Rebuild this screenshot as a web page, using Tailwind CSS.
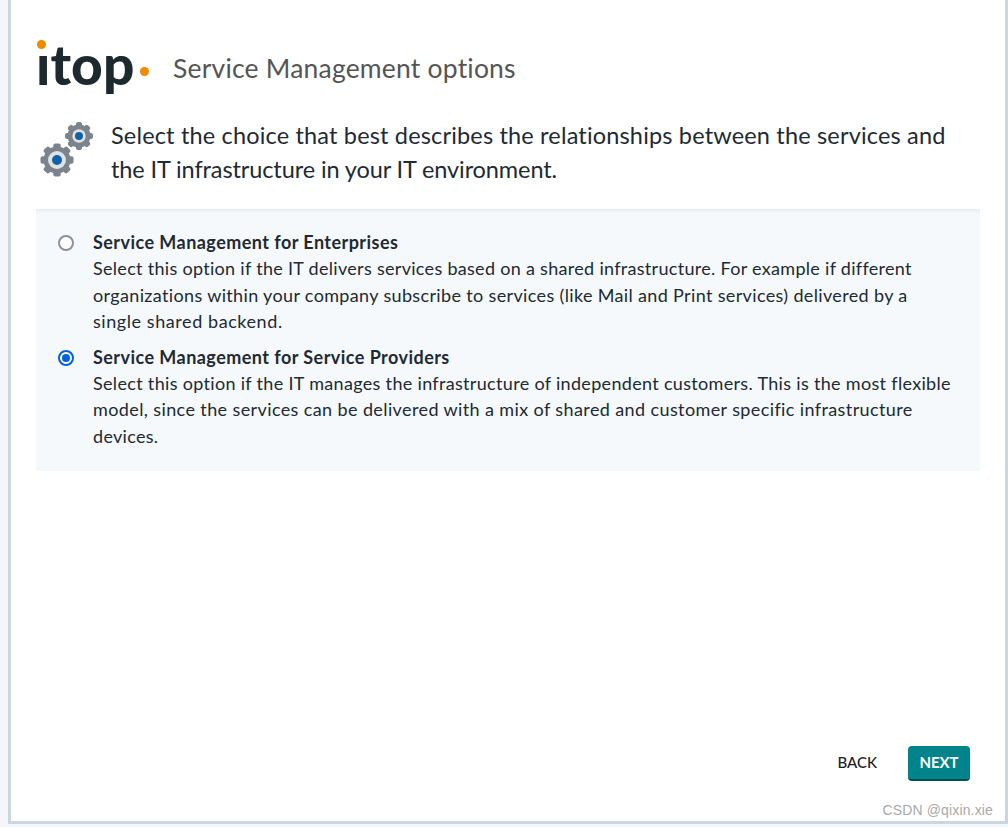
<!DOCTYPE html>
<html lang="en">
<head>
  <meta charset="UTF-8">
  <title>iTop setup</title>
  <script src="https://cdn.jsdelivr.net/npm/@tailwindcss/browser@4"></script>
</head>
<body class="h-[827px] w-[1008px] overflow-hidden bg-[#f4f7fa] font-['Lato','Liberation_Sans',sans-serif] text-[#212934]">
  <div class="relative ml-[8px] flex h-[824px] w-[1000px] flex-col border-b-[3px] border-l-[3px] border-r-[3px] border-[#ccd6e1] bg-white pl-[25px] pr-[25px]">
    <!-- header -->
    <div class="flex h-[108px] items-start">
      <div class="relative mt-[32px] h-[64px] w-[114px] shrink-0">
        <span class="block text-[55px] leading-[64px] font-black tracking-[0.1px] text-[#1c2a30]">ıtop</span>
        <span class="absolute left-[1px] top-[8px] h-[9px] w-[9px] rounded-full bg-[#f08a00]"></span>
        <span class="absolute left-[104px] top-[35px] h-[9px] w-[9px] rounded-full bg-[#f08a00]"></span>
      </div>
      <h1 class="mt-[50px] ml-[23px] text-[26.5px] leading-[36px] font-normal tracking-[0.2px] text-[#555]">Service Management options</h1>
    </div>
    <!-- intro -->
    <div class="flex h-[101px] items-start">
      <svg class="mt-[14px] ml-[4px] h-[56px] w-[54px] shrink-0" viewBox="0 0 54 56">
        <g fill="#7b848d">
          <g transform="translate(39 14)">
            <circle r="11.5"/>
            <rect x="-3" y="-14" width="6" height="28" rx="2"/><rect x="-3" y="-14" width="6" height="28" rx="2" transform="rotate(45)"/><rect x="-3" y="-14" width="6" height="28" rx="2" transform="rotate(90)"/><rect x="-3" y="-14" width="6" height="28" rx="2" transform="rotate(135)"/>
            <circle r="6.7" fill="#dfe1e3"/>
            <circle r="4" fill="#1460a8"/>
          </g>
          <g transform="translate(17 38)">
            <circle r="13.5"/>
            <rect x="-3.7" y="-16.5" width="7.4" height="33" rx="2"/><rect x="-3.7" y="-16.5" width="7.4" height="33" rx="2" transform="rotate(45)"/><rect x="-3.7" y="-16.5" width="7.4" height="33" rx="2" transform="rotate(90)"/><rect x="-3.7" y="-16.5" width="7.4" height="33" rx="2" transform="rotate(135)"/>
            <circle r="9" fill="#dfe1e3"/>
            <circle r="5" fill="#1460a8"/>
          </g>
        </g>
      </svg>
      <p class="mt-[10px] ml-[17px] text-[23.5px] leading-[34px] tracking-[0.17px] text-[#212934]">Select the choice that best describes the relationships between the services and<br><span class="tracking-[-0.1px]">the IT infrastructure in your IT environment.</span></p>
    </div>
    <!-- options -->
    <div class="h-[262px] w-[944px] bg-[#f5f9fc] shadow-[inset_0_4px_4px_-2px_rgba(0,0,0,0.06)] pt-[20px] text-[18px] leading-[26.4px] tracking-[0.3px]">
      <div class="flex">
        <span class="ml-[22px] mt-[6px] h-[16px] w-[16px] shrink-0 rounded-full border-2 border-[#8f8f9d] bg-white"></span>
        <div class="ml-[19px]">
          <div class="font-bold tracking-[0.45px]">Service Management for Enterprises</div>
          <div>Select this option if the IT delivers services based on a shared infrastructure. For example if different<br><span class="tracking-[0.35px]">organizations within your company subscribe to services (like Mail and Print services) delivered by a</span><br><span class="tracking-[0.57px]">single shared backend.</span></div>
        </div>
      </div>
      <div class="mt-[9px] flex">
        <span class="ml-[22px] mt-[6px] flex h-[16px] w-[16px] shrink-0 items-center justify-center rounded-full border-2 border-[#0060df] bg-white">
          <span class="h-[8px] w-[8px] rounded-full bg-[#0060df]"></span>
        </span>
        <div class="ml-[19px]">
          <div class="font-bold tracking-[0.45px]">Service Management for Service Providers</div>
          <div><span class="tracking-[0.32px]">Select this option if the IT manages the infrastructure of independent customers. This is the most flexible</span><br><span class="tracking-[0.39px]">model, since the services can be delivered with a mix of shared and customer specific infrastructure</span><br>devices.</div>
        </div>
      </div>
    </div>
    <!-- buttons -->
    <div class="mt-[275px] flex h-[35px] items-start justify-end pr-[10px]">
      <button class="mr-[31px] h-[32px] text-[15px] font-medium text-[#1a2029]">BACK</button>
      <button class="h-[35px] w-[62px] rounded-[4px] border-b-2 border-[#004d52] bg-[#00838a] text-[15px] font-bold text-white">NEXT</button>
    </div>
    <span class="absolute right-[12px] bottom-[3px] font-['Liberation_Sans',sans-serif] text-[14px] leading-[16px] tracking-[0.15px] text-[#a9a9a9]">CSDN @qixin.xie</span>
  </div>
</body>
</html>
